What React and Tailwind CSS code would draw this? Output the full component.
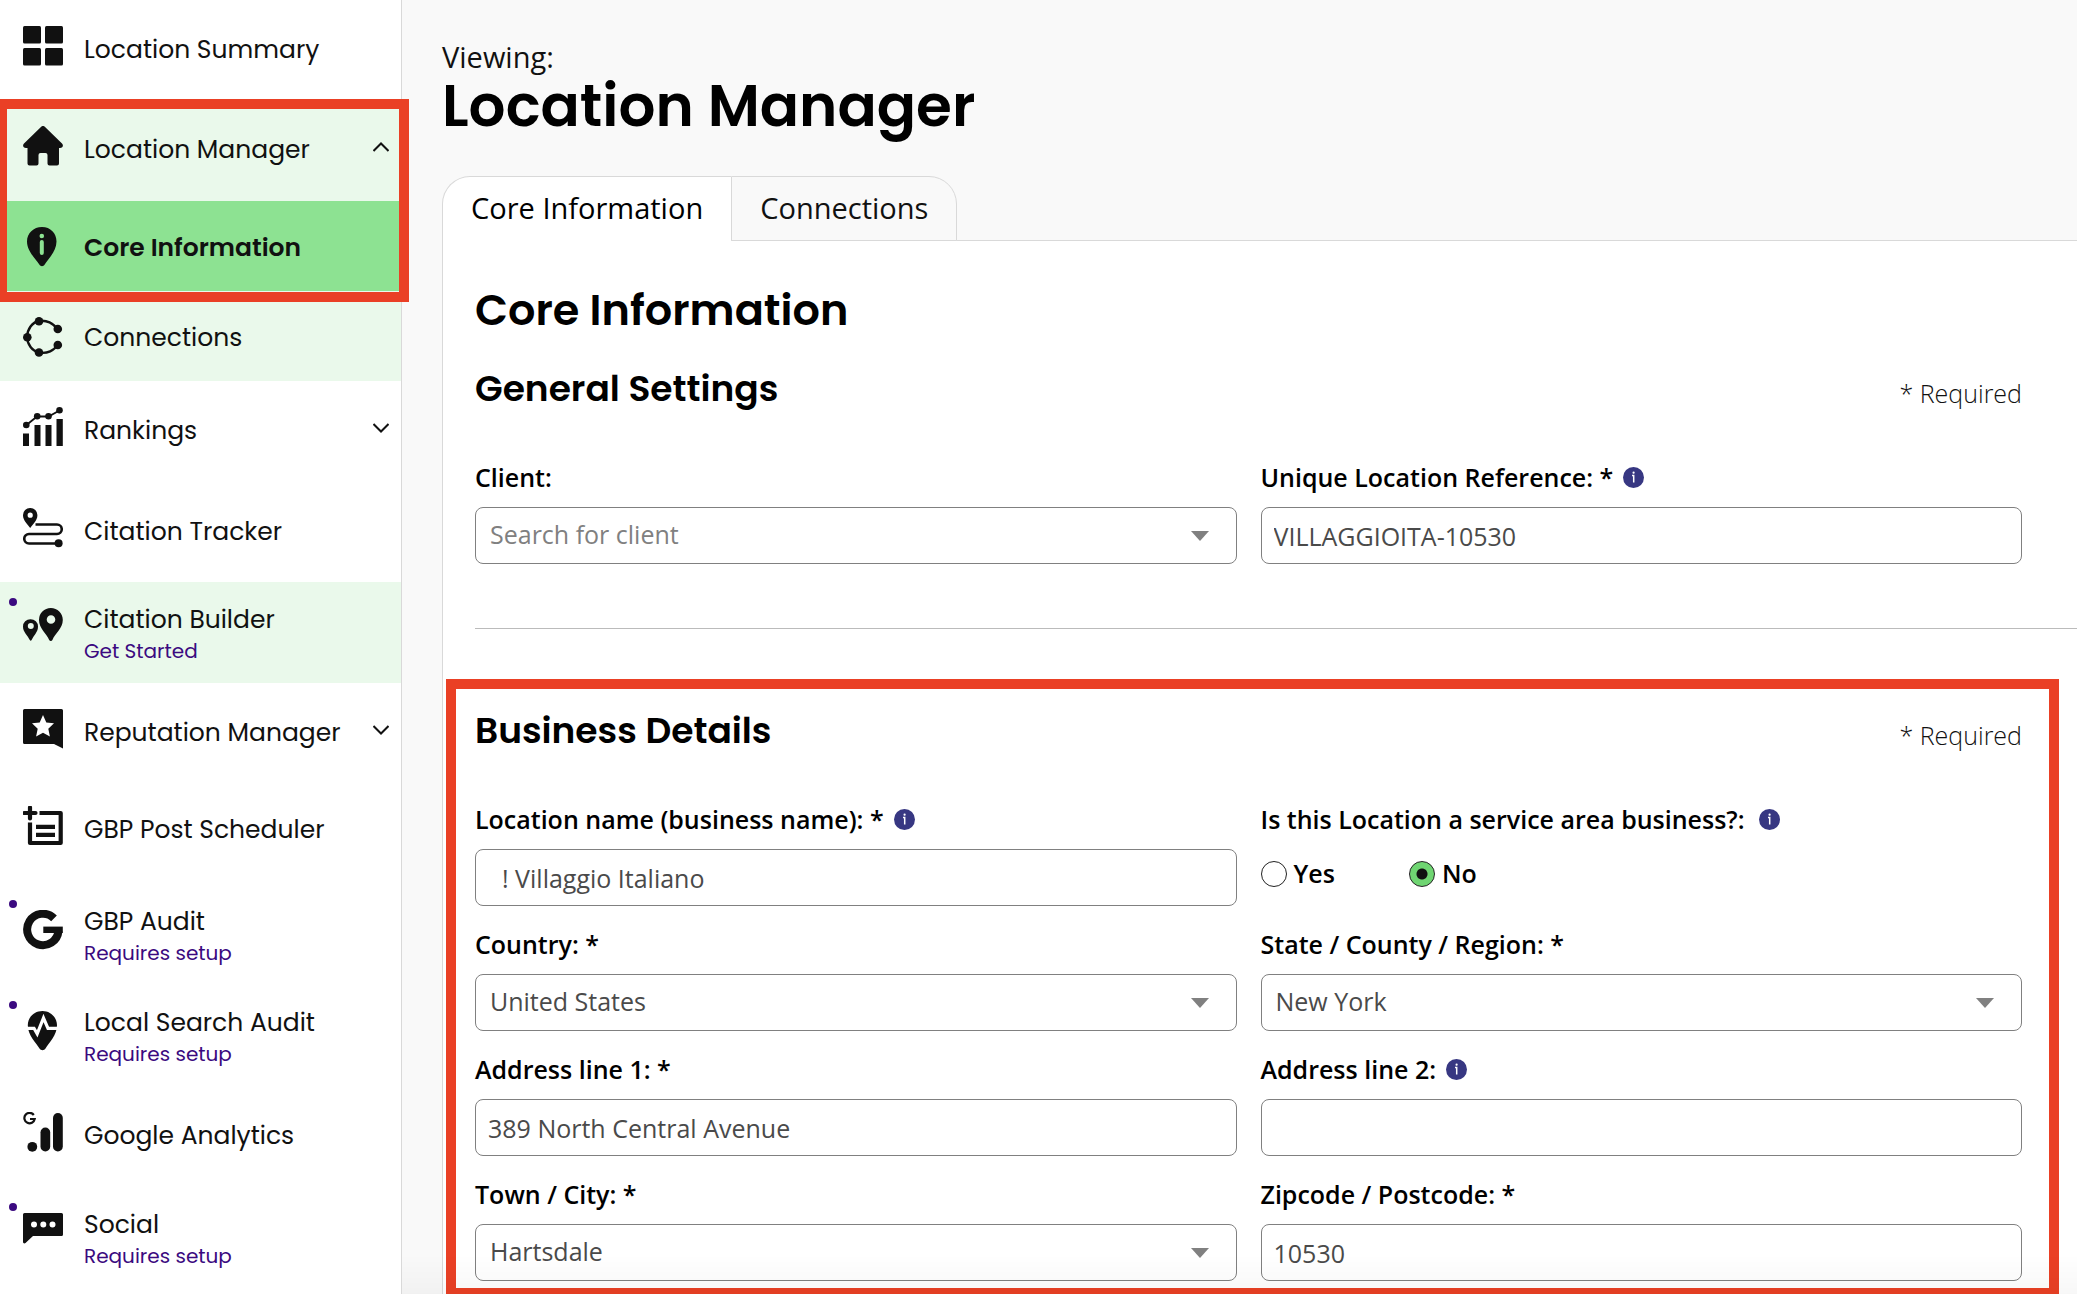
import { useState } from 'react';

const ICONS = {
  grid: (
    <>
      <rect x="0" y="0" width="18" height="17.500" rx="1.5" />
      <rect x="22" y="0" width="18" height="17.500" rx="1.5" />
      <rect x="0" y="22" width="18" height="17.500" rx="1.5" />
      <rect x="22" y="22" width="18" height="17.500" rx="1.5" />
    </>
  ),
  home: (
    <path d="M18.2.8a2.6 2.6 0 0 1 3.6 0L39 17.4c1.8 1.8.8 4.6-2 4.6h-1v15.5a2 2 0 0 1-2 2h-7.500a2 2 0 0 1-2-2V29a2 2 0 0 0-2-2h-5a2 2 0 0 0-2 2v8.500a2 2 0 0 1-2 2H6.500a2 2 0 0 1-2-2V22H3c-2.800 0-3.800-2.800-2-4.600z" />
  ),
  pinInfo: (
    <>
      <path d="M19 0C10.500 0 4 6.300 4 14.500 4 24.500 13 32 16.300 37.500c1.400 2.200 4 2.200 5.400 0C25 32 33.500 24.500 33.500 14.500 33.500 6.300 27.500 0 19 0z" />
      <g className="fill-[#8de292]">
        <circle cx="18.800" cy="9" r="2.300" />
        <rect x="16.800" y="13" width="4" height="15" rx="2" />
      </g>
    </>
  ),
  ring: (
    <>
      <path d="M34.500 12.500A18 18 0 0 0 16 4C9 5.500 4.500 12 4 20c.5 7.500 5 14 12 15.500 8 1.500 15.500-2 18.500-8" fill="none" stroke="currentColor" strokeWidth="2.400" />
      <circle cx="16" cy="4.300" r="4.300" />
      <circle cx="34.800" cy="12" r="4.300" />
      <circle cx="4.300" cy="20.300" r="4.300" />
      <circle cx="34.800" cy="28" r="4.300" />
      <circle cx="16" cy="35.500" r="4.300" />
    </>
  ),
  rankings: (
    <>
      <path d="M3.500 18 14 9.500h11.500L36.500 3.500" fill="none" stroke="currentColor" strokeWidth="1.800" />
      <circle cx="3.300" cy="18" r="3.300" />
      <circle cx="14.200" cy="9.300" r="3.300" />
      <circle cx="25.500" cy="9.300" r="3.300" />
      <circle cx="36.500" cy="3.300" r="3.300" />
      <rect x="0" y="26.500" width="6" height="12.500" />
      <rect x="11.500" y="18" width="6" height="21" />
      <rect x="22.500" y="18" width="6" height="21" />
      <rect x="33.500" y="12" width="6.300" height="27" />
    </>
  ),
  route: (
    <>
      <path fillRule="evenodd" d="M7.200 0A7.100 7.100 0 0 0 0 7.200c0 5.300 4.300 8.300 7.200 12.800 2.900-4.500 7.200-7.500 7.200-12.800A7.100 7.100 0 0 0 7.200 0zm0 4.600a2.600 2.600 0 1 1 0 5.200 2.600 2.600 0 0 1 0-5.200z" />
      <path d="M12.500 16.500H34a4.750 4.750 0 0 1 0 9.500H6a4.750 4.750 0 0 0 0 9.500h29" fill="none" stroke="currentColor" strokeWidth="2.600" />
      <circle cx="35.600" cy="35.300" r="4" />
    </>
  ),
  pins: (
    <>
      <path fillRule="evenodd" d="M27.800 0A11.800 11.800 0 0 0 16 12c0 8.500 7.500 13.500 10.200 20 .6 1.400 2.600 1.400 3.200 0C32 25.500 39.800 20.500 39.800 12c0-6.700-5.300-12-12-12zm.2 7.200a4.300 4.300 0 1 1 0 8.600 4.300 4.300 0 0 1 0-8.600z" />
      <path fillRule="evenodd" d="M7.500 11.200A7.400 7.400 0 0 0 0 18.700c0 5.300 4.800 8.800 6.800 13.300.4.900 1.400.9 1.800 0 2-4.500 6.400-8 6.400-13.300a7.400 7.400 0 0 0-7.500-7.500zm.3 3.900a3 3 0 1 1 0 6 3 3 0 0 1 0-6z" />
    </>
  ),
  review: (
    <path fillRule="evenodd" d="M1.500 0h37A1.500 1.500 0 0 1 40 1.500V39.500L31 35H1.500A1.500 1.500 0 0 1 0 33.500v-32A1.500 1.500 0 0 1 1.500 0zM20 6l3.300 7.400 7.700.9-5.700 5.500 1.600 7.700L20 23.700l-6.900 3.800 1.600-7.700L9 14.300l7.700-.9z" />
  ),
  scheduler: (
    <g fill="none" stroke="currentColor" strokeWidth="4.200">
      <path d="M7 1.500v11M1.500 7h11" strokeLinecap="round" />
      <path d="M16.500 7H37.700v30H7V16.500" strokeLinejoin="round" />
      <path d="M13 20.800h19M13 28.800h19" />
    </g>
  ),
  google: (
    <g fill="none" stroke="currentColor">
      <path d="M31 8.400A15.700 15.700 0 1 0 35.500 21" strokeWidth="8" />
      <path d="M20.300 19.800H39.800" strokeWidth="6.400" />
    </g>
  ),
  pulse: (
    <>
      <path d="M19.500 0C11 0 4.800 6.300 4.800 14.300 4.800 24.500 13 31.500 16.500 37.500c1.500 2.300 4.500 2.300 6 0 3.500-6 11.500-13 11.500-23.200C34 6.300 27.500 0 19.500 0z" />
      <path d="M3 17.300h8l3.200 5.500L20.500 7l4.500 10.300h11" className="stroke-white" fill="none" strokeWidth="3.200" />
    </>
  ),
  analytics: (
    <>
      <path d="M10.800 3A5.200 5.200 0 1 0 11.700 7H7" fill="none" stroke="currentColor" strokeWidth="2.200" />
      <circle cx="9.300" cy="34.800" r="4.900" />
      <rect x="17.500" y="15.500" width="9.700" height="24" rx="4.850" />
      <rect x="30" y="1" width="9.800" height="38.500" rx="4.900" />
    </>
  ),
  chat: (
    <path fillRule="evenodd" d="M1.500 0h37A1.500 1.500 0 0 1 40 1.500v20a1.500 1.500 0 0 1-1.500 1.500H10L2.500 30C1.500 30.800 0 30.400 0 29V1.500A1.500 1.500 0 0 1 1.500 0zM11 8.500a3 3 0 1 0 0 6 3 3 0 0 0 0-6zm9.300 0a3 3 0 1 0 0 6 3 3 0 0 0 0-6zm9.200 0a3 3 0 1 0 0 6 3 3 0 0 0 0-6z" />
  ),
};

const MENU = [
  { label: 'Rankings', icon: 'rankings', chevron: 'down', height: 'h-[101px]' },
  { label: 'Citation Tracker', icon: 'route', height: 'h-[100px]' },
  { label: 'Citation Builder', icon: 'pins', note: 'Get Started', height: 'h-[101px]', tint: 'bg-[#eaf9eb]' },
  { label: 'Reputation Manager', icon: 'review', chevron: 'down', height: 'h-[97px]' },
  { label: 'GBP Post Scheduler', icon: 'scheduler', height: 'h-[104px]' },
  { label: 'GBP Audit', icon: 'google', note: 'Requires setup', height: 'h-[101px]' },
  { label: 'Local Search Audit', icon: 'pulse', note: 'Requires setup', height: 'h-[101px]' },
  { label: 'Google Analytics', icon: 'analytics', height: 'h-[101px]' },
  { label: 'Social', icon: 'chat', note: 'Requires setup', height: 'h-[107px]' },
];

function Chevron({ up }) {
  return (
    <svg viewBox="0 0 16 10" className="w-4 h-2.5 mt-4 shrink-0" fill="none" stroke="currentColor" strokeWidth="2">
      <path d={up ? 'M.5 9 8 1.500 15.500 9' : 'M.5 1 8 8.500 15.500 1'} />
    </svg>
  );
}

function NavItem({ label, icon, note, chevron, height, tint = '', bold, sub }) {
  return (
    <a href="#" className={`relative flex items-start pt-[26px] pl-[23px] pr-3 text-[#111] ${height} ${tint}`}>
      {note && <span className="absolute left-[9px] top-4 w-2 h-2 rounded-full bg-[#3b0a80]" />}
      <svg viewBox="0 0 40 40" className="w-10 h-10 shrink-0" fill="currentColor">{ICONS[icon]}</svg>
      <span className={`flex-1 ml-[21px] whitespace-nowrap ${note ? '-mt-1' : sub ? 'mt-[5px]' : 'mt-2'}`}>
        <span className={`block text-[25px] leading-8 ${bold ? 'font-semibold' : ''}`}>{label}</span>
        {note && <span className="block text-[20px] leading-[30px] text-[#3b0a80]">{note}</span>}
      </span>
      {chevron && <Chevron up={chevron === 'up'} />}
    </a>
  );
}

function Sidebar() {
  return (
    <nav className="relative z-10 w-[402px] shrink-0 bg-white border-r border-[#d9d9d9] font-['Poppins','Inter',sans-serif]">
      <NavItem label="Location Summary" icon="grid" height="h-[100px]" />
      <div className="relative">
        <NavItem label="Location Manager" icon="home" chevron="up" height="h-[101px]" tint="bg-[#eaf9eb]" />
        <NavItem label="Core Information" icon="pinInfo" height="h-[90px]" tint="bg-[#8de292]" bold sub />
        <div className="absolute -top-px -bottom-[11px] -left-[3px] -right-2 border-[10px] border-[#ea4025] pointer-events-none z-10" />
      </div>
      <NavItem label="Connections" icon="ring" height="h-[90px]" tint="bg-[#eaf9eb]" sub />
      {MENU.map(item => <NavItem key={item.label} {...item} />)}
    </nav>
  );
}

function InfoIcon() {
  return (
    <svg viewBox="0 0 21 21" className="w-[21px] h-[21px] mb-0.5 shrink-0" aria-hidden="true">
      <circle cx="10.500" cy="10.500" r="10.500" fill="#373782" />
      <path d="M9 8.600h1.700v6.900" stroke="#fff" strokeWidth="1.500" fill="none" />
      <circle cx="10.600" cy="5.700" r="1.100" fill="#fff" />
    </svg>
  );
}

function Field({ id, label, info, type = 'input', value, placeholder, inputClass = 'px-3' }) {
  const [current, setCurrent] = useState(value ?? '');
  const box = 'block w-full h-[57px] rounded-lg border border-[#808080] bg-transparent text-[25px] outline-none';

  return (
    <div>
      <label htmlFor={id} className="flex items-center gap-2.5 h-[34px] mb-3 text-[25px] font-semibold text-black">
        {label}
        {info && <InfoIcon />}
      </label>
      {type === 'select' ? (
        <div className="relative">
          <select
            id={id}
            value={current}
            onChange={e => setCurrent(e.target.value)}
            className={`${box} appearance-none pl-[14px] pb-0.5 ${placeholder ? 'text-[#808080]' : 'text-[#4a4a4a]'}`}
          >
            <option value={current}>{placeholder || current}</option>
          </select>
          <svg viewBox="0 0 18 10" className="absolute right-7 top-6 w-[18px] h-2.5 pointer-events-none" fill="#808080">
            <path d="M0 0h18L9 10z" />
          </svg>
        </div>
      ) : (
        <input
          id={id}
          type="text"
          value={current}
          onChange={e => setCurrent(e.target.value)}
          className={`${box} text-[#4a4a4a] ${inputClass}`}
        />
      )}
    </div>
  );
}

function ServiceArea() {
  const [answer, setAnswer] = useState('No');
  return (
    <fieldset>
      <legend className="flex items-center gap-3.5 h-[34px] text-[25px] font-semibold text-black">
        Is this Location a service area business?:
        <InfoIcon />
      </legend>
      <div className="flex gap-[74px] mt-5">
        {['Yes', 'No'].map(option => (
          <label key={option} className="flex items-center gap-[7px] h-[34px] text-[25px] font-semibold text-black">
            <input
              type="radio"
              name="service-area"
              checked={answer === option}
              onChange={() => setAnswer(option)}
              className="appearance-none w-[26px] h-[26px] rounded-full border border-[#222] checked:bg-[radial-gradient(circle,#111_0_5px,#6fd572_6px)]"
            />
            {option}
          </label>
        ))}
      </div>
    </fieldset>
  );
}

function SectionHead({ title }) {
  return (
    <div className="flex items-end justify-between">
      <h3 className="text-[36px] leading-[50px] font-semibold font-['Poppins','Inter',sans-serif]">{title}</h3>
      <span className="text-[25px] leading-[42px] font-light text-[#111]">* Required</span>
    </div>
  );
}

export default function App() {
  return (
    <div className="flex h-screen overflow-hidden bg-[#f9f9f9] text-black font-['Open_Sans',sans-serif]">
      <Sidebar />

      <main className="flex-1 min-w-0 pl-10 pt-[37px]">
        <p className="text-[29px] leading-10 text-[#111]">Viewing:</p>
        <h1 className="text-[58px] leading-[58px] font-semibold font-['Poppins','Inter',sans-serif]">Location Manager</h1>

        {/* Tabs sit on the panel's top border */}
        <div role="tablist" className="relative flex mt-[41px] -mb-px text-[29px]">
          <button type="button" role="tab" aria-selected="true" className="h-[65px] px-7 pb-0.5 bg-white border-t border-l border-[#d9d9d9] rounded-tl-[28px]">
            Core Information
          </button>
          <button type="button" role="tab" aria-selected="false" className="h-[65px] px-7 pb-0.5 bg-[#f9f9f9] border border-[#d9d9d9] rounded-tr-[28px] text-[#111]">
            Connections
          </button>
        </div>

        <div className="bg-white border-t border-l border-[#d9d9d9] pl-8 pt-[41px] pb-10">
          <h2 className="text-[43px] leading-[56px] font-semibold font-['Poppins','Inter',sans-serif]">Core Information</h2>
          <section className="pr-[55px] mt-[26px]">
            <SectionHead title="General Settings" />
            <div className="grid grid-cols-2 gap-x-6 mt-[47px]">
              <Field id="client" label="Client:" type="select" placeholder="Search for client" />
              <Field id="reference" label="Unique Location Reference: *" info value="VILLAGGIOITA-10530" />
            </div>
          </section>

          <hr className="mt-16 border-[#bbb]" />

          <section className="mt-[50px] -ml-[29px] mr-[18px] pt-[17px] pl-[19px] pr-[27px] pb-[7px] border-[10px] border-[#ea4025]">
            <SectionHead title="Business Details" />
            <div className="grid grid-cols-2 gap-x-6 gap-y-[22px] mt-[47px]">
              <Field id="name" label="Location name (business name): *" info value="! Villaggio Italiano" inputClass="pl-[26px] pr-3" />
              <ServiceArea />
              <Field id="country" label="Country: *" type="select" value="United States" />
              <Field id="state" label="State / County / Region: *" type="select" value="New York" />
              <Field id="address1" label="Address line 1: *" value="389 North Central Avenue" />
              <Field id="address2" label="Address line 2:" info />
              <Field id="town" label="Town / City: *" type="select" value="Hartsdale" />
              <Field id="zip" label="Zipcode / Postcode: *" value="10530" />
            </div>
          </section>
        </div>
      </main>

      <div className="fixed inset-x-0 bottom-0 h-10 bg-gradient-to-b from-transparent to-black/3 pointer-events-none" />
    </div>
  );
}
